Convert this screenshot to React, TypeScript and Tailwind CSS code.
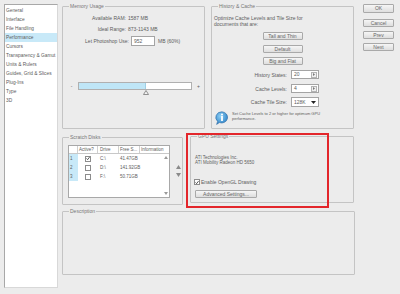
import React from 'react';

const sections = [
  'General',
  'Interface',
  'File Handling',
  'Performance',
  'Cursors',
  'Transparency & Gamut',
  'Units & Rulers',
  'Guides, Grid & Slices',
  'Plug-Ins',
  'Type',
  '3D',
];

const Group: React.FC<{ title: string; className?: string; children?: React.ReactNode }> = ({ title, className, children }) => (
  <fieldset className={`border border-[#c4c4c4] rounded-[1px] ${className ?? ''}`}>
    <legend className="ml-[6px] px-[1px] text-[5px] leading-[6px] text-[#777]">{title}</legend>
    {children}
  </fieldset>
);

const Check: React.FC<{ checked?: boolean }> = ({ checked }) => (
  <div className="w-[6px] h-[6px] bg-white border border-[#8c8c8c] flex items-center justify-center">
    {checked && (
      <svg width="5" height="5" viewBox="0 0 5 5">
        <path d="M0.6 2.5 L2 3.9 L4.4 0.8" fill="none" stroke="#2a2a2a" strokeWidth="1" />
      </svg>
    )}
  </div>
);

const PushButton: React.FC<{ label: string; className?: string }> = ({ label, className }) => (
  <div
    className={`flex items-center justify-center bg-gradient-to-b from-[#f6f6f6] to-[#dedede] border border-[#a9a9a9] rounded-[1px] text-[5px] leading-[5px] text-[#666] ${className ?? ''}`}
  >
    {label}
  </div>
);

const Field: React.FC<{ value: string; kind: 'spin' | 'drop' }> = ({ value, kind }) => (
  <div className="ml-[4px] w-[28px] h-full bg-white border border-[#a4a4a4] flex items-center">
    <span className="flex-1 pl-[2px] text-[5px] leading-[5px]">{value}</span>
    {kind === 'spin' ? (
      <div className="w-[6px] h-[6px] mr-[1px] border border-[#b4b4b4] bg-[#f0f0f0] flex items-center justify-center">
        <svg width="2" height="3" viewBox="0 0 2 3">
          <path d="M0 0 L2 1.5 L0 3 Z" fill="#777" />
        </svg>
      </div>
    ) : (
      <svg width="5" height="3" viewBox="0 0 5 3" className="mr-[2px]">
        <path d="M0 0 L5 0 L2.5 3 Z" fill="#222" />
      </svg>
    )}
  </div>
);

const InfoIcon = () => (
  <svg width="14" height="14" viewBox="0 0 14 14">
    <defs>
      <radialGradient id="ib" cx="0.4" cy="0.35" r="0.7">
        <stop offset="0" stopColor="#8fd0f5" />
        <stop offset="1" stopColor="#2a7fc4" />
      </radialGradient>
    </defs>
    <path d="M7 0.8 A6 5.6 0 1 1 4.4 11.6 L1.6 13.4 L2.6 10.4 A6 5.6 0 0 1 7 0.8 Z" fill="url(#ib)" stroke="#2b6aa5" strokeWidth="0.6" />
    <circle cx="7" cy="3.4" r="1" fill="#fff" />
    <rect x="6.1" y="5" width="1.8" height="5" fill="#fff" />
  </svg>
);

const disks = [
  { n: '1', on: true, drive: 'C:\\', free: '41.47GB' },
  { n: '2', on: false, drive: 'D:\\', free: '141.92GB' },
  { n: '3', on: false, drive: 'F:\\', free: '50.71GB' },
];

export default function App() {
  return (
    <div className="w-[400px] h-[294px] bg-[#ececec] flex items-start font-['Liberation_Sans',Arial,sans-serif] text-[5px] leading-[6px] text-[#5c5c5c] overflow-hidden">
      {/* section list */}
      <div className="ml-[4px] mt-[4px] w-[54px] h-[284px] bg-white border border-[#a8a8a8] border-r-[#d8d8d8] border-b-[#d8d8d8] pt-[1px] overflow-hidden">
        {sections.map(s => (
          <div
            key={s}
            className={`h-[9px] pl-[1px] flex items-center whitespace-nowrap text-[4.8px] ${s === 'Performance' ? 'bg-[#c8e9f8]' : ''}`}
          >
            {s}
          </div>
        ))}
      </div>

      {/* settings */}
      <div className="ml-[4px] mt-[3px] w-[293px] flex flex-col">
        <div className="flex gap-[6px]">
          <Group title="Memory Usage" className="w-[143px] h-[126px]">
            <div className="flex mt-[6px]">
              <span className="w-[63px] text-right">Available RAM:</span>
              <span className="ml-[2px]">1587 MB</span>
            </div>
            <div className="flex mt-[5px]">
              <span className="w-[63px] text-right">Ideal Range:</span>
              <span className="ml-[2px]">873-1143 MB</span>
            </div>
            <div className="flex items-center mt-[4px] h-[10px]">
              <span className="w-[66px] text-right">Let Photoshop Use:</span>
              <div className="ml-[2px] w-[24px] h-[10px] bg-white border border-[#a4a4a4] pl-[2px] flex items-center">952</div>
              <span className="ml-[3px]">MB (60%)</span>
            </div>
            <div className="flex items-center mt-[36px] h-[8px]">
              <span className="ml-[6px] w-[5px] text-center">-</span>
              <div className="ml-[4px] w-[114px] h-[8px] bg-white border border-[#b0b0b0] flex">
                <div className="w-[67px] h-full bg-[#bfe6f7] border-r border-[#a0cfe4]" />
              </div>
              <span className="ml-[4px] w-[5px] text-center">+</span>
            </div>
            <svg width="6" height="5" viewBox="0 0 6 5" className="ml-[80px]">
              <path d="M3 0.5 L5.5 4.5 L0.5 4.5 Z" fill="#f4f4f4" stroke="#777" strokeWidth="0.8" />
            </svg>
          </Group>

          <Group title="History & Cache" className="w-[143px] h-[126px]">
            <div className="pl-[2px] mt-[6px]">
              <div>Optimize Cache Levels and Tile Size for</div>
              <div>documents that are:</div>
            </div>
            <div className="flex flex-col items-center">
              <PushButton label="Tall and Thin" className="mt-[5px] w-[40px] h-[8px]" />
              <PushButton label="Default" className="mt-[5px] w-[40px] h-[8px]" />
              <PushButton label="Big and Flat" className="mt-[4px] w-[40px] h-[8px]" />
            </div>
            <div className="flex items-center mt-[5px] h-[9px]">
              <span className="w-[75px] text-right">History States:</span>
              <Field value="20" kind="spin" />
            </div>
            <div className="flex items-center mt-[5px] h-[9px]">
              <span className="w-[75px] text-right">Cache Levels:</span>
              <Field value="4" kind="spin" />
            </div>
            <div className="flex items-center mt-[4px] h-[10px]">
              <span className="w-[75px] text-right">Cache Tile Size:</span>
              <Field value="128K" kind="drop" />
            </div>
            <div className="flex items-start mt-[4px]">
              <div className="ml-[3px]">
                <InfoIcon />
              </div>
              <div className="ml-[3px] text-[4px] leading-[5px]">
                <div>Set Cache Levels to 2 or higher for optimum GPU</div>
                <div>performance.</div>
              </div>
            </div>
          </Group>
        </div>

        <div className="relative flex items-start mt-[4px] h-[75px]">
          <Group title="Scratch Disks" className="mt-[1px] w-[121px] h-[71px]">
            <div className="flex items-start">
              <div className="ml-[5px] mt-[5px] w-[102px] h-[53px] bg-white border border-[#a8a8a8] flex flex-col text-[4.5px]">
                <div className="flex h-[8px] border-b border-[#c8c8c8]">
                  <div className="w-[9px] border-r border-[#d0d0d0]" />
                  <div className="w-[20px] pl-[1px] border-r border-[#d0d0d0] flex items-center">Active?</div>
                  <div className="w-[21px] pl-[2px] border-r border-[#d0d0d0] flex items-center">Drive</div>
                  <div className="w-[21px] pl-[1px] border-r border-[#d0d0d0] whitespace-nowrap overflow-hidden flex items-center">Free S...</div>
                  <div className="flex-1 pl-[1px] whitespace-nowrap overflow-hidden flex items-center">Information</div>
                </div>
                <div className="flex flex-1">
                  <div className="flex-1 flex flex-col">
                    {disks.map(d => (
                      <div key={d.n} className="flex h-[9px] items-center">
                        <div className="w-[9px] h-full bg-[#c8e9f8] pl-[1px] flex items-center">{d.n}</div>
                        <div className="w-[20px] flex justify-center">
                          <Check checked={d.on} />
                        </div>
                        <div className="w-[21px] pl-[2px]">{d.drive}</div>
                        <div className="w-[21px] pl-[1px]">{d.free}</div>
                      </div>
                    ))}
                  </div>
                  <div className="w-[7px] flex flex-col items-center justify-between py-[2px]">
                    <svg width="4" height="3" viewBox="0 0 4 3">
                      <path d="M2 0 L4 3 L0 3 Z" fill="#9a9a9a" />
                    </svg>
                    <svg width="4" height="3" viewBox="0 0 4 3">
                      <path d="M0 0 L4 0 L2 3 Z" fill="#9a9a9a" />
                    </svg>
                  </div>
                </div>
              </div>
              <div className="ml-[6px] mt-[25px] flex flex-col gap-[4px]">
                <svg width="5" height="4" viewBox="0 0 5 4">
                  <path d="M2.5 0 L5 4 L0 4 Z" fill="#8a8a8a" />
                </svg>
                <svg width="5" height="4" viewBox="0 0 5 4">
                  <path d="M0 0 L5 0 L2.5 4 Z" fill="#8a8a8a" />
                </svg>
              </div>
            </div>
          </Group>

          <Group title="GPU Settings" className="ml-[7px] w-[164px] h-[70px]">
            <div className="pl-[4px] mt-[16px] leading-[5px] text-[4.5px]">
              <div>ATI Technologies Inc.</div>
              <div>ATI Mobility Radeon HD 5650</div>
            </div>
            <div className="flex items-center pl-[3px] mt-[14px] h-[6px]">
              <Check checked />
              <span className="ml-[1px]">Enable OpenGL Drawing</span>
            </div>
            <PushButton label="Advanced Settings..." className="ml-[4px] mt-[5px] w-[62px] h-[8px]" />
          </Group>

          {/* red annotation frame */}
          <div className="absolute left-[124px] top-0 w-[143px] h-[75px] border-2 border-[#e3262b]" />
        </div>

        <Group title="Description" className="w-[293px] h-[67px]" />
      </div>

      {/* dialog buttons */}
      <div className="ml-[8px] mt-[4px] w-[31px] flex flex-col">
        <PushButton label="OK" className="h-[9px] border-[#6bb6dc] from-[#f2fafe] to-[#d6ebf5]" />
        <PushButton label="Cancel" className="mt-[6px] h-[8px]" />
        <PushButton label="Prev" className="mt-[4px] h-[8px]" />
        <PushButton label="Next" className="mt-[4px] h-[8px]" />
      </div>
    </div>
  );
}
